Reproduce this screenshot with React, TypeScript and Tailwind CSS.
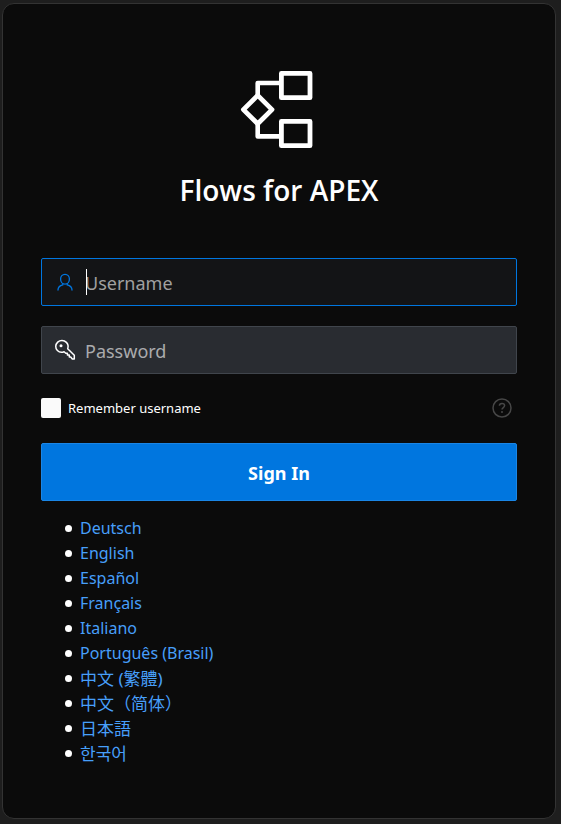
import React from "react";

const languages = [
  { label: "Deutsch", code: "de" },
  { label: "English", code: "en" },
  { label: "Español", code: "es" },
  { label: "Français", code: "fr" },
  { label: "Italiano", code: "it" },
  { label: "Português (Brasil)", code: "pt-br" },
  { label: "中文 (繁體)", code: "zh-tw", cjk: true },
  { label: "中文（简体）", code: "zh-cn", cjk: true },
  { label: "日本語", code: "ja", cjk: true },
  { label: "한국어", code: "ko", cjk: true },
];

function FlowsLogo() {
  return (
    <svg width="78" height="80" viewBox="0 0 78 80" fill="none" stroke="white" aria-hidden="true">
      <g strokeWidth="4.8" strokeLinejoin="round">
        <rect x="41.4" y="3.4" width="28.6" height="24.3" />
        <rect x="41.4" y="51.4" width="28.6" height="24.3" />
        <path d="M17.700 25.400 32 39.600 17.700 53.800 3.400 39.600Z" />
      </g>
      <path d="M40 13H17.700V25M17.700 54V66.400H40" strokeWidth="4.6" strokeLinejoin="round" />
    </svg>
  );
}

function UserIcon() {
  return (
    <svg width="20" height="20" viewBox="0 0 20 20" fill="none" stroke="currentColor" strokeWidth="1.3" strokeLinecap="round" strokeLinejoin="round" aria-hidden="true">
      <path d="M10 2.4c-2.6 0-4.4 2-4.4 4.6 0 2.900 1.700 5.200 4.400 5.200s4.400-2.300 4.400-5.200c0-2.600-1.800-4.600-4.400-4.600Z" />
      <path d="M7.800 11.800v1.100c-3.300.8-4.800 2-4.800 5.200M12.200 11.800v1.100c3.300.8 4.800 2 4.800 5.200" />
    </svg>
  );
}

function KeyIcon() {
  return (
    <svg width="22" height="22" viewBox="0 0 22 22" fill="none" stroke="currentColor" strokeWidth="1.500" strokeLinejoin="round" aria-hidden="true">
      <path d="M13.700 9.700c.8-2.400.3-4.700-1.300-6.300C9.900.9 6.100 1 3.700 3.100 1.300 5.400 1 9 3.400 11.500c1.800 1.800 4.300 2.200 6.700 1.200l1.700 1.500h1.600v1.900h1.900v1.900h1.400l1.600 1.900H20.300v-3.600Z" />
      <circle cx="7" cy="6.800" r="1.500" fill="currentColor" stroke="none" />
    </svg>
  );
}

function HelpIcon() {
  return (
    <svg width="20" height="20" viewBox="0 0 20 20" fill="none" stroke="currentColor" aria-hidden="true">
      <circle cx="10" cy="10" r="9" strokeWidth="1.500" />
      <path d="M7.400 7.700c0-1.500 1.100-2.300 2.600-2.300s2.600.9 2.600 2.200c0 1.900-2.600 2-2.600 4" strokeWidth="1.500" />
      <circle cx="10" cy="14" r="1" fill="currentColor" stroke="none" />
    </svg>
  );
}

export default function App() {
  return (
    <div className="min-h-screen bg-[#1e1e1e] pt-[3px] pr-[5px] pb-[5px] pl-[2px] font-['Segoe_UI','Noto_Sans','Noto_Sans_CJK_SC','Noto_Sans_CJK_KR',sans-serif] text-white">
      <main className="flex flex-col rounded-xl border border-[#333333] bg-[#0b0b0b] px-[38px] pt-[66px] pb-[52px]">
        <header className="flex flex-col items-center gap-5">
          <FlowsLogo />
          <h1 className="font-['Segoe_UI','Open_Sans',sans-serif] text-[28px] leading-10 font-semibold">Flows for APEX</h1>
        </header>

        <form className="mt-12 flex flex-col" onSubmit={(e) => e.preventDefault()}>
          <div className="relative flex h-12 items-center rounded-xs border border-[#0076df] bg-[#131416] pl-[13px] text-[#0076df]">
            <span className="flex w-[30px] shrink-0"><UserIcon /></span>
            <input type="text" aria-label="Username" placeholder="Username" className="h-full min-w-0 flex-1 bg-transparent pt-[2px] text-lg text-white caret-transparent outline-none placeholder:text-[#a0a0a0]" />
            <span className="absolute top-[10px] left-[44px] h-[26px] w-px bg-white" />
          </div>
          <div className="mt-5 flex h-12 items-center rounded-xs border border-[#40454c] bg-[#292c31] pl-[12px]">
            <span className="flex w-[31px] shrink-0"><KeyIcon /></span>
            <input type="password" aria-label="Password" placeholder="Password" className="h-full min-w-0 flex-1 bg-transparent pt-[2px] text-lg text-white outline-none placeholder:text-[#aaabad]" />
          </div>

          <div className="mt-6 flex h-5 items-center justify-between pr-[5px]">
            <label className="flex items-center gap-[7px] text-[13px] leading-5">
              <input type="checkbox" className="size-5 appearance-none rounded-xs bg-[#fafafa] checked:bg-[#0076df]" />
              Remember username
            </label>
            <button type="button" aria-label="Help" className="text-[#474747]"><HelpIcon /></button>
          </div>

          <button type="submit" className="mt-[25px] h-[58px] rounded-xs border border-[#1a86e6] bg-[#0076df] pt-[2px] text-lg font-bold">Sign In</button>
        </form>

        <ul className="mt-[15px] pl-6 text-base leading-[25px]">
          {languages.map(({ label, code, cjk }) => (
            <li key={code} className="flex h-[25px] items-center gap-2 before:size-[7px] before:rounded-full before:bg-white">
              <a href={"#" + code} lang={code} className={cjk ? "text-[17px] text-[#479ffa]" : "text-[#479ffa]"}>{label}</a>
            </li>
          ))}
        </ul>
      </main>
    </div>
  );
}
